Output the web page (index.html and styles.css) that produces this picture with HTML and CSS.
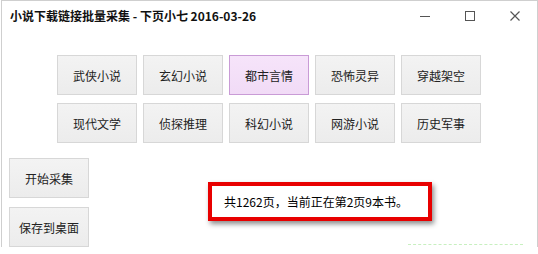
FILE: index.html
```html
<!DOCTYPE html>
<html lang="zh-CN">
<head>
    <meta charset="UTF-8">
    <title>小说下载链接批量采集</title>
    <link rel="stylesheet" href="styles.css">
</head>
<body>

<div class="window">
    <div class="titlebar">
        <div class="title">小说下载链接批量采集 - 下页小七 2016-03-26</div>
        <div class="controls">
            <span class="ctl"><svg width="10" height="10" viewBox="0 0 10 10"><path d="M0 5.5h10" stroke="#555" stroke-width="1"/></svg></span>
            <span class="ctl"><svg width="10" height="10" viewBox="0 0 10 10"><rect x="0.5" y="0.5" width="9" height="9" fill="none" stroke="#555" stroke-width="1"/></svg></span>
            <span class="ctl"><svg width="10" height="10" viewBox="0 0 10 10"><path d="M0.5 0.5l9 9M9.5 0.5l-9 9" stroke="#555" stroke-width="1.2"/></svg></span>
        </div>
    </div>

    <div class="categories">
        <button class="btn">武侠小说</button>
        <button class="btn">玄幻小说</button>
        <button class="btn active">都市言情</button>
        <button class="btn">恐怖灵异</button>
        <button class="btn">穿越架空</button>
        <button class="btn">现代文学</button>
        <button class="btn">侦探推理</button>
        <button class="btn">科幻小说</button>
        <button class="btn">网游小说</button>
        <button class="btn">历史军事</button>
    </div>

    <div class="bottom">
        <div class="actions">
            <button class="btn">开始采集</button>
            <button class="btn">保存到桌面</button>
        </div>
        <div class="status">
            <div class="status-box">共1262页，当前正在第2页9本书。</div>
            <div class="progress"></div>
        </div>
    </div>
</div>

</body>
</html>
```

FILE: styles.css
```css
body {
    margin: 0;
    background: #fff;
    font-family: "Noto Sans CJK SC", "Liberation Sans", sans-serif;
    font-size: 12px;
    color: #222;
}
.window {
    margin-left: 1px;
    width: 535px;
    height: 246px;
    border: 1px solid #cfcfcf;
    border-bottom: none;
    background: #fff;
    display: flex;
    flex-direction: column;
    overflow: hidden;
}
.titlebar {
    height: 29px;
    display: flex;
    align-items: center;
    justify-content: space-between;
}
.title {
    padding-left: 8px;
    font-weight: bold;
    font-size: 12px;
    color: #111;
}
.controls { display: flex; align-items: center; }
.ctl {
    width: 45px;
    height: 29px;
    display: flex;
    align-items: center;
    justify-content: center;
}
.categories {
    margin: 25px 0 0 55px;
    width: 430px;
    display: flex;
    flex-wrap: wrap;
    gap: 8px 6px;
}
.btn {
    width: 80px;
    height: 40px;
    padding: 0;
    border: 1px solid #d7d7d7;
    background: linear-gradient(#f3f3f3, #ececec);
    font-family: "Noto Sans CJK SC", sans-serif;
    font-size: 12px;
    color: #222;
}
.btn.active {
    border-color: #c99bd6;
    background: linear-gradient(#f6e4fa, #f1dbf6);
}
.bottom {
    flex: 1;
    display: flex;
    margin-top: 15px;
    padding-left: 7px;
}
.actions {
    display: flex;
    flex-direction: column;
    gap: 9px;
}
.status {
    flex: 1;
    display: flex;
    flex-direction: column;
    padding-left: 119px;
}
.status-box {
    margin-top: 24px;
    width: 204px;
    height: 31px;
    border: 4px solid #e80000;
    padding-left: 12px;
    line-height: 31px;
    color: #000;
    box-shadow: 2px 3px 5px rgba(0, 0, 0, 0.45);
}
.progress {
    margin: auto 14px 2px 200px;
    height: 0;
    border-top: 1px dashed #c8f0c0;
}
```
